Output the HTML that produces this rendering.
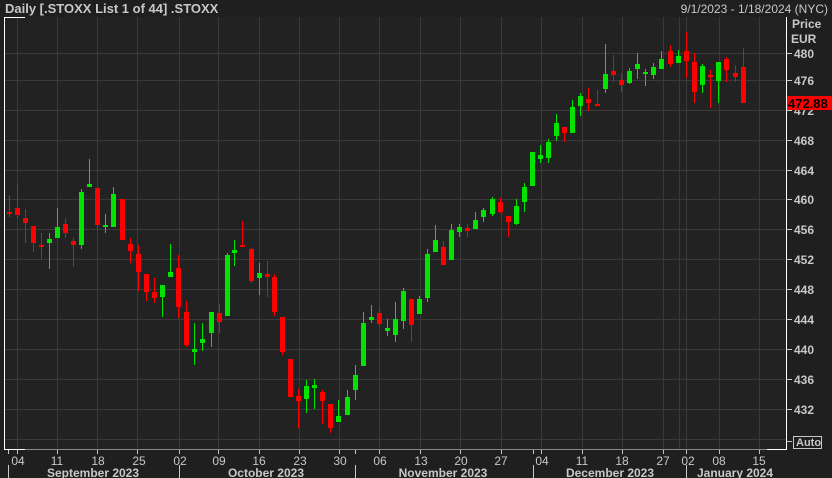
<!DOCTYPE html>
<html><head><meta charset="utf-8"><style>
html,body{margin:0;padding:0;background:#1f1f1f;width:832px;height:478px;overflow:hidden}
svg{display:block}
text{font-family:"Liberation Sans",sans-serif}
</style></head><body>
<svg width="832" height="478" viewBox="0 0 832 478">
<rect x="0" y="0" width="832" height="478" fill="#1f1f1f"/>
<rect x="4" y="17" width="783" height="432" fill="#222222"/>
<g stroke="#3a3a3a" stroke-width="1">
<line x1="4" y1="53.5" x2="787" y2="53.5"/><line x1="4" y1="80.5" x2="787" y2="80.5"/><line x1="4" y1="110.5" x2="787" y2="110.5"/><line x1="4" y1="140.5" x2="787" y2="140.5"/><line x1="4" y1="170.5" x2="787" y2="170.5"/><line x1="4" y1="199.5" x2="787" y2="199.5"/><line x1="4" y1="229.5" x2="787" y2="229.5"/><line x1="4" y1="259.5" x2="787" y2="259.5"/><line x1="4" y1="289.5" x2="787" y2="289.5"/><line x1="4" y1="319.5" x2="787" y2="319.5"/><line x1="4" y1="349.5" x2="787" y2="349.5"/><line x1="4" y1="379.5" x2="787" y2="379.5"/><line x1="4" y1="409.5" x2="787" y2="409.5"/>
<line x1="4" y1="439.5" x2="787" y2="439.5"/>
<line x1="17.5" y1="17" x2="17.5" y2="449"/><line x1="57.5" y1="17" x2="57.5" y2="449"/><line x1="97.5" y1="17" x2="97.5" y2="449"/><line x1="137.5" y1="17" x2="137.5" y2="449"/><line x1="179.5" y1="17" x2="179.5" y2="449"/><line x1="218.5" y1="17" x2="218.5" y2="449"/><line x1="259.5" y1="17" x2="259.5" y2="449"/><line x1="299.5" y1="17" x2="299.5" y2="449"/><line x1="339.5" y1="17" x2="339.5" y2="449"/><line x1="379.5" y1="17" x2="379.5" y2="449"/><line x1="420.5" y1="17" x2="420.5" y2="449"/><line x1="460.5" y1="17" x2="460.5" y2="449"/><line x1="501.5" y1="17" x2="501.5" y2="449"/><line x1="541.5" y1="17" x2="541.5" y2="449"/><line x1="582.5" y1="17" x2="582.5" y2="449"/><line x1="622.5" y1="17" x2="622.5" y2="449"/><line x1="663.5" y1="17" x2="663.5" y2="449"/><line x1="679.5" y1="17" x2="679.5" y2="449"/><line x1="686.5" y1="17" x2="686.5" y2="449"/><line x1="719.5" y1="17" x2="719.5" y2="449"/><line x1="759.5" y1="17" x2="759.5" y2="449"/>
</g>
<g stroke="#ffffff" stroke-width="1">
<line x1="4.5" y1="17" x2="4.5" y2="449"/><line x1="4" y1="17.5" x2="25" y2="17.5"/>
<line x1="786.5" y1="17" x2="786.5" y2="449"/><line x1="767" y1="449.5" x2="787" y2="449.5"/><line x1="4" y1="449.5" x2="25" y2="449.5"/>
</g>
<line x1="25" y1="449.5" x2="767" y2="449.5" stroke="#888" stroke-width="1"/>
<g id="c"></g>
<text x="5" y="13" font-size="13" font-weight="bold" fill="#c8c8c8">Daily [.STOXX List 1 of 44] .STOXX</text>
<text x="828" y="13" font-size="12" fill="#c8c8c8" text-anchor="end">9/1/2023 - 1/18/2024 (NYC)</text>
<g font-size="12" font-weight="bold" fill="#c8c8c8">
<text x="792" y="28">Price</text><text x="791" y="43">EUR</text>
<text x="794" y="58">480</text><text x="794" y="85">476</text><text x="794" y="115">472</text><text x="794" y="145">468</text><text x="794" y="175">464</text><text x="794" y="204">460</text><text x="794" y="234">456</text><text x="794" y="264">452</text><text x="794" y="294">448</text><text x="794" y="324">444</text><text x="794" y="354">440</text><text x="794" y="384">436</text><text x="794" y="414">432</text>
</g>
<g stroke="#c8c8c8"><line x1="787" y1="53.5" x2="792" y2="53.5"/><line x1="787" y1="80.5" x2="792" y2="80.5"/><line x1="787" y1="110.5" x2="792" y2="110.5"/><line x1="787" y1="140.5" x2="792" y2="140.5"/><line x1="787" y1="170.5" x2="792" y2="170.5"/><line x1="787" y1="199.5" x2="792" y2="199.5"/><line x1="787" y1="229.5" x2="792" y2="229.5"/><line x1="787" y1="259.5" x2="792" y2="259.5"/><line x1="787" y1="289.5" x2="792" y2="289.5"/><line x1="787" y1="319.5" x2="792" y2="319.5"/><line x1="787" y1="349.5" x2="792" y2="349.5"/><line x1="787" y1="379.5" x2="792" y2="379.5"/><line x1="787" y1="409.5" x2="792" y2="409.5"/><line x1="787" y1="441.5" x2="792" y2="441.5"/></g>
<rect x="787" y="96" width="45" height="14" fill="#ff0000"/>
<text x="788" y="108" font-size="13" font-weight="bold" fill="#000">472.88</text>
<rect x="793.5" y="436.5" width="28" height="12" fill="none" stroke="#c8c8c8"/>
<text x="796" y="446" font-size="11" font-weight="bold" fill="#c8c8c8">Auto</text>
<g stroke="#c8c8c8"><line x1="8.5" y1="450" x2="8.5" y2="454"/><line x1="17.5" y1="450" x2="17.5" y2="454"/><line x1="57.5" y1="450" x2="57.5" y2="454"/><line x1="97.5" y1="450" x2="97.5" y2="454"/><line x1="137.5" y1="450" x2="137.5" y2="454"/><line x1="179.5" y1="450" x2="179.5" y2="454"/><line x1="218.5" y1="450" x2="218.5" y2="454"/><line x1="259.5" y1="450" x2="259.5" y2="454"/><line x1="299.5" y1="450" x2="299.5" y2="454"/><line x1="339.5" y1="450" x2="339.5" y2="454"/><line x1="355.5" y1="450" x2="355.5" y2="454"/><line x1="379.5" y1="450" x2="379.5" y2="454"/><line x1="420.5" y1="450" x2="420.5" y2="454"/><line x1="460.5" y1="450" x2="460.5" y2="454"/><line x1="501.5" y1="450" x2="501.5" y2="454"/><line x1="533.5" y1="450" x2="533.5" y2="454"/><line x1="541.5" y1="450" x2="541.5" y2="454"/><line x1="582.5" y1="450" x2="582.5" y2="454"/><line x1="622.5" y1="450" x2="622.5" y2="454"/><line x1="663.5" y1="450" x2="663.5" y2="454"/><line x1="686.5" y1="450" x2="686.5" y2="454"/><line x1="719.5" y1="450" x2="719.5" y2="454"/><line x1="759.5" y1="450" x2="759.5" y2="454"/>
<line x1="8.5" y1="465" x2="8.5" y2="478"/><line x1="179.5" y1="465" x2="179.5" y2="478"/><line x1="355.5" y1="465" x2="355.5" y2="478"/><line x1="533.5" y1="465" x2="533.5" y2="478"/><line x1="686.5" y1="465" x2="686.5" y2="478"/></g>
<g font-size="12" fill="#c8c8c8" text-anchor="middle">
<text x="18" y="465">04</text><text x="57" y="465">11</text><text x="98" y="465">18</text><text x="139" y="465">25</text><text x="180" y="465">02</text><text x="219" y="465">09</text><text x="259" y="465">16</text><text x="300" y="465">23</text><text x="340" y="465">30</text><text x="380" y="465">06</text><text x="421" y="465">13</text><text x="461" y="465">20</text><text x="501" y="465">27</text><text x="542" y="465">04</text><text x="582" y="465">11</text><text x="622" y="465">18</text><text x="663" y="465">27</text><text x="688" y="465">02</text><text x="719" y="465">08</text><text x="759" y="465">15</text>
</g>
<g font-size="12" font-weight="bold" fill="#c8c8c8" text-anchor="middle">
<text x="93" y="477">September 2023</text><text x="266" y="477">October 2023</text><text x="443" y="477">November 2023</text><text x="610" y="477">December 2023</text><text x="735" y="477">January 2024</text>
</g>
</svg>
<script>
var d=[
[9,'r',195,217,212,214],[17,'r',183,218,208,215],[25,'r',209,243,218,223],[33,'r',226,252,226,243],[41,'r',233,260,245,247],[49,'g',233,269,239,243],[57,'g',208,238,227,238],[65,'r',218,238,224,233],[73,'r',238,267,241,245],[81,'g',189,249,192,245],[89,'g',159,187,184,187],[97,'r',188,230,188,225],[105,'g',214,233,225,227],[113,'g',187,227,194,227],[122,'r',199,240,199,240],[130,'r',238,263,244,251],[138,'r',245,291,254,272],[146,'r',274,301,274,292],[154,'r',278,303,292,298],[162,'g',285,317,285,297],[170,'g',244,277,272,277],[178,'r',255,318,268,307],[186,'r',301,347,312,345],[194,'g',323,365,349,352],[202,'g',323,351,339,343],[211,'g',312,347,312,333],[219,'r',304,333,313,322],[227,'g',253,316,255,316],[234,'g',240,266,250,253],[242,'r',221,247,245,247],[251,'r',248,283,249,281],[259,'g',263,295,273,278],[267,'r',261,297,274,277],
[274,'r',274,316,277,312],[282,'r',317,355,317,352],[290,'r',359,397,359,397],[298,'r',389,428,396,401],[306,'g',380,413,386,399],[314,'g',379,409,385,388],[322,'r',390,424,392,401],[330,'r',404,433,404,428],[338,'g',400,422,416,422],[347,'g',390,415,397,415],[355,'g',365,400,375,390],[363,'g',312,366,323,366],[371,'g',305,323,317,320],[379,'r',307,327,313,324],[387,'g',319,336,328,331],[395,'g',302,342,319,335],[403,'g',288,329,291,321],[411,'r',299,342,299,325],[419,'g',296,314,299,314],[427,'g',249,302,254,298],[435,'g',225,252,240,252],[443,'r',241,265,247,265],[451,'g',224,260,230,260],[459,'g',224,237,227,232],[467,'r',224,237,228,231],[475,'g',212,229,220,229],[483,'g',208,222,210,217],[492,'g',197,216,199,214],[500,'r',198,213,202,212],[508,'r',216,237,216,222],[516,'g',199,225,206,224],[524,'g',183,212,187,202],
[532,'g',152,186,152,186],[540,'g',145,163,155,159],[548,'g',139,163,142,158],[556,'g',114,141,123,136],[564,'r',127,142,127,133],[572,'g',100,133,107,133],[580,'g',93,116,96,106],[588,'r',88,111,99,103],[597,'r',90,106,104,106],[605,'g',44,93,74,89],[613,'r',55,82,71,75],[621,'r',73,92,80,85],[629,'g',68,84,71,83],[637,'g',53,79,64,69],[645,'g',69,86,72,73],[653,'g',63,79,67,75],[661,'g',51,69,59,69],[670,'r',45,67,51,64],[678,'g',50,63,56,63],[686,'r',32,78,51,61],[694,'r',53,103,62,92],[702,'g',64,93,66,85],[710,'r',70,108,75,77],[718,'g',62,103,62,81],[726,'r',57,82,59,70],[735,'r',65,82,73,77],[743,'r',48,103,67,103]];
var s='';
d.forEach(function(c){var col=c[1]=='g'?'#00e400':'#ff0000';
s+='<line x1="'+(c[0]+.5)+'" y1="'+c[2]+'" x2="'+(c[0]+.5)+'" y2="'+c[3]+'" stroke="'+col+'" stroke-width="1"/>';
var h=Math.max(2,c[5]-c[4]);s+='<rect x="'+(c[0]-2)+'" y="'+c[4]+'" width="5" height="'+h+'" fill="'+col+'"/>';});
document.getElementById('c').innerHTML=s;
</script>
</body></html>
